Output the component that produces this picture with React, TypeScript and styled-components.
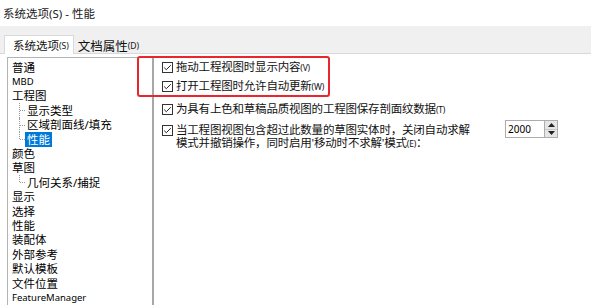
import styled, { createGlobalStyle } from "styled-components";

const GlobalStyle = createGlobalStyle`
    html, body {
        margin: 0;
        padding: 0;
        background: #ffffff;
    }
    body {
        font-family: "Noto Sans", "Noto Sans CJK SC", sans-serif;
        color: #000000;
    }
`

const Window = styled.div`
    position: relative;
    width: 591px;
    height: 305px;
    overflow: hidden;
    display: flex;
    flex-direction: column;
    background: #ffffff;
`

const TitleBar = styled.div`
    height: 26px;
    display: flex;
    align-items: center;
    padding-left: 3px;
    font-size: 11.5px;
    color: #1a1a1a;
`

const TabStrip = styled.div`
    height: 27px;
    display: flex;
    align-items: flex-end;
    padding-left: 4px;
    background: #f0f0f0;
    border-bottom: 1px solid #d9d9d9;
`

const Tab = styled.div<{ $active?: boolean }>`
    height: ${({ $active }) => ($active ? "18px" : "16px")};
    display: flex;
    align-items: center;
    padding: ${({ $active }) => ($active ? "0 4px 0 8px" : "0 3px")};
    margin-bottom: ${({ $active }) => ($active ? "-1px" : "0")};
    background: ${({ $active }) => ($active ? "#ffffff" : "transparent")};
    border: 1px solid ${({ $active }) => ($active ? "#d9d9d9" : "transparent")};
    border-bottom: none;
    font-size: ${({ $active }) => ($active ? "11.5px" : "12.5px")};
    color: #111;
    white-space: nowrap;
`

const Key = styled.span<{ $size?: number }>`
    font-size: ${({ $size }) => $size ?? 8.5}px;
`

const Body = styled.div`
    flex: 1;
    display: flex;
    padding: 3px 0 0 7px;
    min-height: 0;
`

const Tree = styled.div`
    width: 140px;
    flex-shrink: 0;
    padding: 2px 0 0 4px;
    border: 1px solid #b4b4b4;
    border-right: 2px solid #a8a8a8;
    border-bottom: none;
    display: flex;
    flex-direction: column;
`

const TreeRow = styled.div<{ $child?: boolean; $latin?: boolean; $last?: boolean }>`
    position: relative;
    height: 14.4px;
    display: flex;
    align-items: center;
    padding-left: ${({ $child }) => ($child ? "15px" : "0")};
    font-size: ${({ $latin }) => ($latin ? "9.5px" : "11.5px")};
    white-space: nowrap;
    &::before {
        content: "";
        display: ${({ $child }) => ($child ? "block" : "none")};
        position: absolute;
        left: 7px;
        top: 0;
        height: ${({ $last }) => ($last ? "50%" : "100%")};
        border-left: 1px dotted #9a9a9a;
    }
    &::after {
        content: "";
        display: ${({ $child }) => ($child ? "block" : "none")};
        position: absolute;
        left: 8px;
        top: 50%;
        width: 5px;
        border-top: 1px dotted #9a9a9a;
    }
`

const TreeLabel = styled.span<{ $selected?: boolean }>`
    height: 15px;
    line-height: 15px;
    padding: 0 ${({ $selected }) => ($selected ? "2px" : "0")};
    margin-left: ${({ $selected }) => ($selected ? "-2px" : "0")};
    background: ${({ $selected }) => ($selected ? "#0078d7" : "transparent")};
    color: ${({ $selected }) => ($selected ? "#ffffff" : "#000000")};
`

const Options = styled.div`
    flex: 1;
    display: flex;
    flex-direction: column;
    padding: 3px 0 0 8px;
`

const OptionRow = styled.div<{ $gap?: number }>`
    display: flex;
    align-items: flex-start;
    margin-top: ${({ $gap }) => $gap ?? 0}px;
`

const CheckBox = styled.span`
    width: 11px;
    height: 11px;
    flex-shrink: 0;
    margin-top: 2px;
    margin-right: 3px;
    display: flex;
`

const OptionText = styled.div`
    font-size: 11.5px;
    line-height: 14px;
    color: #111;
    white-space: nowrap;
    letter-spacing: -0.2px;
`

const WrapText = styled(OptionText)`
    line-height: 13px;
    width: 300px;
`

const Spinner = styled.div`
    display: flex;
    margin-left: 29px;
    margin-top: -3px;
`

const SpinInput = styled.div`
    width: 36px;
    height: 16px;
    border: 1px solid #adadad;
    border-right: none;
    font-size: 10px;
    line-height: 16px;
    padding-left: 2px;
    color: #000;
`

const SpinButtons = styled.div`
    width: 14px;
    height: 18px;
    display: flex;
    flex-direction: column;
    border: 1px solid #adadad;
    box-sizing: border-box;
    background: #e6e6e6;
`

const SpinButton = styled.div`
    flex: 1;
    display: flex;
    align-items: center;
    justify-content: center;
    &:first-child {
        border-bottom: 1px solid #c8c8c8;
    }
`

const Highlight = styled.div`
    position: absolute;
    left: 137px;
    top: 56px;
    width: 189px;
    height: 37px;
    border: 2px solid #e8262b;
    border-radius: 3px;
    pointer-events: none;
`

function Check() {
    return (
        <CheckBox>
            <svg width="11" height="11" viewBox="0 0 11 11">
                <rect x="0.5" y="0.5" width="10" height="10" fill="#fff" stroke="#333" />
                <path d="M2.2 5.6 L4.3 7.7 L8.8 3.2" fill="none" stroke="#222" strokeWidth="1" />
            </svg>
        </CheckBox>
    );
}

const treeItems: { label: string; child?: boolean; latin?: boolean; selected?: boolean; last?: boolean }[] = [
    { label: "普通" },
    { label: "MBD", latin: true },
    { label: "工程图" },
    { label: "显示类型", child: true },
    { label: "区域剖面线/填充", child: true },
    { label: "性能", child: true, selected: true, last: true },
    { label: "颜色" },
    { label: "草图" },
    { label: "几何关系/捕捉", child: true, last: true },
    { label: "显示" },
    { label: "选择" },
    { label: "性能" },
    { label: "装配体" },
    { label: "外部参考" },
    { label: "默认模板" },
    { label: "文件位置" },
    { label: "FeatureManager", latin: true },
];

export default function App() {
    return (
        <>
            <GlobalStyle />
            <Window>
                <TitleBar>系统选项(S) - 性能</TitleBar>
                <TabStrip>
                    <Tab $active>系统选项<Key>(S)</Key></Tab>
                    <Tab>文档属性<Key>(D)</Key></Tab>
                </TabStrip>
                <Body>
                    <Tree>
                        {treeItems.map((item, i) => (
                            <TreeRow key={`${i}_tree`} $child={item.child} $latin={item.latin} $last={item.last}>
                                <TreeLabel $selected={item.selected}>{item.label}</TreeLabel>
                            </TreeRow>
                        ))}
                    </Tree>
                    <Options>
                        <OptionRow>
                            <Check />
                            <OptionText>拖动工程视图时显示内容<Key>(V)</Key></OptionText>
                        </OptionRow>
                        <OptionRow $gap={4}>
                            <Check />
                            <OptionText>打开工程图时允许自动更新<Key>(W)</Key></OptionText>
                        </OptionRow>
                        <OptionRow $gap={8}>
                            <Check />
                            <OptionText>为具有上色和草稿品质视图的工程图保存剖面纹数据<Key>(T)</Key></OptionText>
                        </OptionRow>
                        <OptionRow $gap={6}>
                            <Check />
                            <WrapText>
                                当工程图视图包含超过此数量的草图实体时，关闭自动求解<br />
                                模式并撤销操作，同时启用'移动时不求解'模式<Key>(E)</Key>：
                            </WrapText>
                            <Spinner>
                                <SpinInput>2000</SpinInput>
                                <SpinButtons>
                                    <SpinButton>
                                        <svg width="7" height="4" viewBox="0 0 7 4"><path d="M0 4 L3.5 0 L7 4 Z" fill="#222" /></svg>
                                    </SpinButton>
                                    <SpinButton>
                                        <svg width="7" height="4" viewBox="0 0 7 4"><path d="M0 0 L3.5 4 L7 0 Z" fill="#222" /></svg>
                                    </SpinButton>
                                </SpinButtons>
                            </Spinner>
                        </OptionRow>
                    </Options>
                </Body>
                <Highlight />
            </Window>
        </>
    );
}
